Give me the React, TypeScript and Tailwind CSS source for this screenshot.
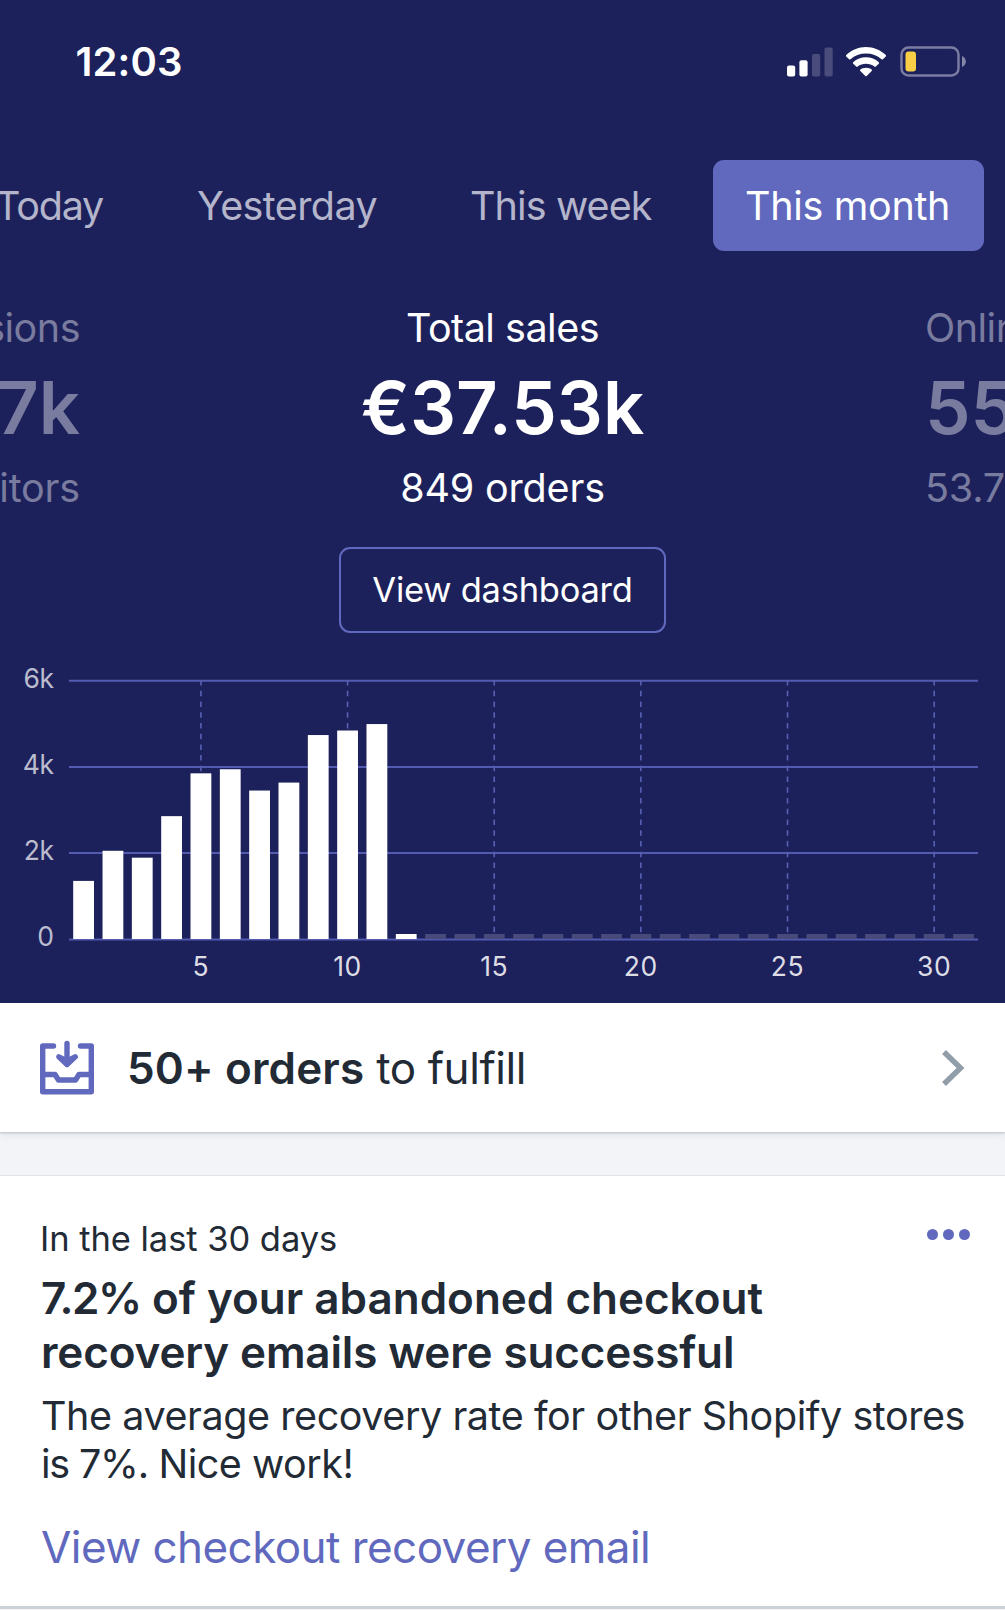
import clsx from "clsx";

// Daily sales for the month, in store currency
const dailySales = [1350, 2050, 1890, 2855, 3850, 3945, 3450, 3635, 4740, 4845, 4995, 116];
const daysInMonth = 31;
const today = 12;

const chart = {
  left: 69,
  right: 978,
  baseline: 306,
  pxPerK: 43.03,
  firstBar: 73.2,
  pitch: 29.33,
  barWidth: 20.8,
};

const tabs = [
  { label: "Today", className: "-ml-[5px] w-[202px] tracking-[-1.2px]" },
  { label: "Yesterday", className: "w-[273px] tracking-[-0.6px]" },
  { label: "This week", className: "w-[243px] tracking-[-0.9px]" },
];

function SignalIcon() {
  return (
    <svg width="46" height="30" viewBox="0 0 46 30" fill="#fff">
      <rect x="0" y="18.5" width="8.2" height="11" rx="2" />
      <rect x="12.4" y="13.3" width="8.2" height="16.2" rx="2" />
      <rect x="25" y="7" width="8.2" height="22.5" rx="2" opacity="0.2" />
      <rect x="37.5" y="0.5" width="8.2" height="29" rx="2" opacity="0.2" />
    </svg>
  );
}

function WifiIcon() {
  return (
    <svg width="42" height="30" viewBox="0 0 42 30" fill="#fff">
      <path d="M21 0C28.600 0 35.600 3 40.800 8Q41.400 8.700 40.800 9.400L37.900 12.300Q37.200 12.900 36.500 12.300C32.400 8.600 27 6.600 21 6.600S9.600 8.600 5.500 12.300Q4.800 12.900 4.100 12.300L1.200 9.400Q0.600 8.700 1.200 8C6.400 3 13.400 0 21 0Z" />
      <path d="M21 10.300C25.900 10.300 30.400 12.100 33.800 15.300Q34.500 16 33.800 16.700L30.800 19.600Q30.100 20.200 29.400 19.600C27.100 17.700 24.200 16.800 21 16.800S14.900 17.700 12.600 19.600Q11.900 20.200 11.200 19.600L8.200 16.700Q7.500 16 8.200 15.300C11.600 12.100 16.100 10.300 21 10.300Z" />
      <path d="M21 20.700C23.200 20.700 25.200 21.400 26.700 22.600Q27.300 23.200 26.700 23.900L21.700 29Q21 29.700 20.300 29L15.300 23.900Q14.700 23.200 15.300 22.600C16.800 21.400 18.800 20.700 21 20.700Z" />
    </svg>
  );
}

function BatteryIcon() {
  return (
    <svg width="66" height="31" viewBox="0 0 66 31">
      <rect x="1.5" y="1.5" width="57" height="28" rx="7" fill="none" stroke="#7b7da2" strokeWidth="2.4" />
      <path d="M62 10C64.600 11 65.800 13.100 65.800 15.500S64.600 20 62 21Z" fill="#8486a8" />
      <rect x="5.5" y="5.5" width="10.5" height="20" rx="3" fill="#f7ce46" />
    </svg>
  );
}

function OrdersIcon() {
  return (
    <svg
      width="54"
      height="56"
      viewBox="0 0 54 56"
      fill="none"
      stroke="#6069be"
      strokeWidth="5.4"
      strokeLinecap="round"
      strokeLinejoin="round"
    >
      <path d="M13.500 6H2.700V51.700H51.300V6H40.500" />
      <path d="M2.700 34.500H15L18.500 40H35.500L39 34.500H51.300" />
      <path d="M27 3.500V24" />
      <path d="M18.800 16.800L27 24.500L35.200 16.800L27 21Z" fill="#6069be" />
    </svg>
  );
}

function SalesChart() {
  const barX = (day: number) => chart.firstBar + (day - 1) * chart.pitch;
  const midX = (day: number) => barX(day) + chart.barWidth / 2;

  return (
    <svg width="1005" height="370" viewBox="0 0 1005 370" className="block font-['Inter',sans-serif] text-[26.5px]">
      {/* Horizontal grid */}
      {[6, 4, 2, 0].map((k) => {
        const y = chart.baseline - k * chart.pxPerK;
        return (
          <g key={k}>
            <line
              x1={chart.left}
              x2={chart.right}
              y1={k === 0 ? y + 0.5 : y}
              y2={k === 0 ? y + 0.5 : y}
              stroke="#535bb0"
              strokeWidth="2"
            />
            <text x="53.5" y={y + 7} textAnchor="end" fill="#bbbccd" letterSpacing="-0.5">
              {k === 0 ? "0" : `${k}k`}
            </text>
          </g>
        );
      })}

      {/* Day markers */}
      {[5, 10, 15, 20, 25, 30].map((day) => (
        <g key={day}>
          <line
            x1={midX(day)}
            x2={midX(day)}
            y1="48"
            y2="301"
            stroke="#5860b4"
            strokeWidth="1.6"
            strokeDasharray="5.5 5.23"
            strokeDashoffset="1"
          />
          <text x={midX(day)} y="343" textAnchor="middle" fill="#dddde6" letterSpacing="0.6">
            {day}
          </text>
        </g>
      ))}

      {/* Bars, with stubs for the days still to come */}
      {Array.from({ length: daysInMonth }, (_, i) => {
        const day = i + 1;
        const h = day <= today ? (dailySales[i] / 1000) * chart.pxPerK : 5;
        return (
          <rect
            key={day}
            x={barX(day)}
            y={chart.baseline - h}
            width={chart.barWidth}
            height={h}
            fill={day <= today ? "#fff" : "#484a7b"}
          />
        );
      })}
    </svg>
  );
}

function Metric({
  title,
  value,
  detail,
  className,
}: {
  title: string;
  value: string;
  detail: string;
  className?: string;
}) {
  return (
    <div className={clsx("flex flex-col whitespace-nowrap text-[39.5px] leading-[48px]", className)}>
      <p className="tracking-[-0.5px]">{title}</p>
      <p className="my-3 text-[72.5px] font-semibold leading-[88px]">{value}</p>
      <p className="tracking-[-0.17px]">{detail}</p>
    </div>
  );
}

export default function App() {
  return (
    <div className="h-[1610px] w-[1005px] overflow-hidden bg-[#f3f4f7] font-['Inter',sans-serif] text-[#222b35]">
      <header className="relative z-10 h-[1003px] bg-[#1d215b] text-white">
        {/* Status bar */}
        <div className="flex h-[123px] items-center justify-between pl-[75.5px] pr-[39px]">
          <span className="text-[40px] font-semibold tracking-[0.1px]">12:03</span>
          <div className="flex items-center">
            <SignalIcon />
            <span className="ml-3 mr-[13px]">
              <WifiIcon />
            </span>
            <BatteryIcon />
          </div>
        </div>

        {/* Date range */}
        <nav className="mt-[37px] flex h-[91px] items-center whitespace-nowrap text-[39.5px]">
          {tabs.map((tab) => (
            <button key={tab.label} className={clsx("shrink-0 pt-[2px] text-left text-[#b4b5cb]", tab.className)}>
              {tab.label}
            </button>
          ))}
          <button className="h-full w-[271px] shrink-0 rounded-[11px] bg-[#6069be] pr-[2px] pt-[2px] tracking-[-0.32px]">
            This month
          </button>
        </nav>

        {/* Metrics carousel */}
        <section className="mt-[53px] flex justify-between">
          <Metric
            title="Sessions"
            value="7k"
            detail="Visitors"
            className="w-20 items-end overflow-hidden text-[#797b9f]"
          />
          <Metric title="Total sales" value="€37.53k" detail="849 orders" className="items-center" />
          <Metric
            title="Online store"
            value="55"
            detail="53.7"
            className="w-20 overflow-hidden text-[#797b9f]"
          />
        </section>

        <div className="flex h-[121px] items-end justify-center">
          <button className="h-[86px] w-[327px] rounded-[11px] border-[2.5px] border-[#6069be] text-[34.5px] tracking-[-0.25px]">
            View dashboard
          </button>
        </div>

        <SalesChart />
      </header>

      <main>
        <a className="relative flex h-[129px] items-center bg-white px-10 text-[44px] shadow-[0_1px_2px_#b9c2cd,0_3px_8px_#dfe3e8]">
          <OrdersIcon />
          <span className="ml-[33px]">
            <b className="font-semibold tracking-[0.15px]">50+ orders</b>
            <span className="tracking-[-0.42px]"> to fulfill</span>
          </span>
          <svg width="24" height="38" viewBox="0 0 24 38" fill="none" className="ml-auto">
            <path d="M3 3L19.500 19L3 35" stroke="#919eaa" strokeWidth="5.5" />
          </svg>
        </a>

        <article className="mt-[43px] flex h-[434px] flex-col border-b-[3px] border-t border-b-[#cbd1d9] border-t-[#dfe3e8] bg-white pl-[41px] pr-[35px] pt-[41px]">
          <div className="flex h-11 items-center justify-between">
            <p className="-ml-px text-[34.5px] tracking-[-0.05px]">In the last 30 days</p>
            <button className="mb-[10px] flex gap-[5px]">
              <span className="size-[11px] rounded-full bg-[#6069be]" />
              <span className="size-[11px] rounded-full bg-[#6069be]" />
              <span className="size-[11px] rounded-full bg-[#6069be]" />
            </button>
          </div>
          <h2 className="mt-[10px] text-[44px] font-semibold leading-[54px] tracking-[-0.14px]">
            <span className="tracking-[-1.4px]">7.2%</span>
            <span className="tracking-[0px]"> of your abandoned checkout</span>
            <br />
            recovery emails were successful
          </h2>
          <p className="mt-[14px] whitespace-nowrap text-[39.5px] leading-[47.5px] tracking-[-0.43px]">
            The average recovery rate for other Shopify stores
            <br />
            <span className="tracking-[-1.2px]">is 7%.</span>
            <span className="tracking-[-0.5px]"> Nice work!</span>
          </p>
          <a className="mt-8 text-[44px] leading-[54px] tracking-[-0.56px] text-[#6069be]">
            View checkout recovery email
          </a>
        </article>
      </main>
    </div>
  );
}
